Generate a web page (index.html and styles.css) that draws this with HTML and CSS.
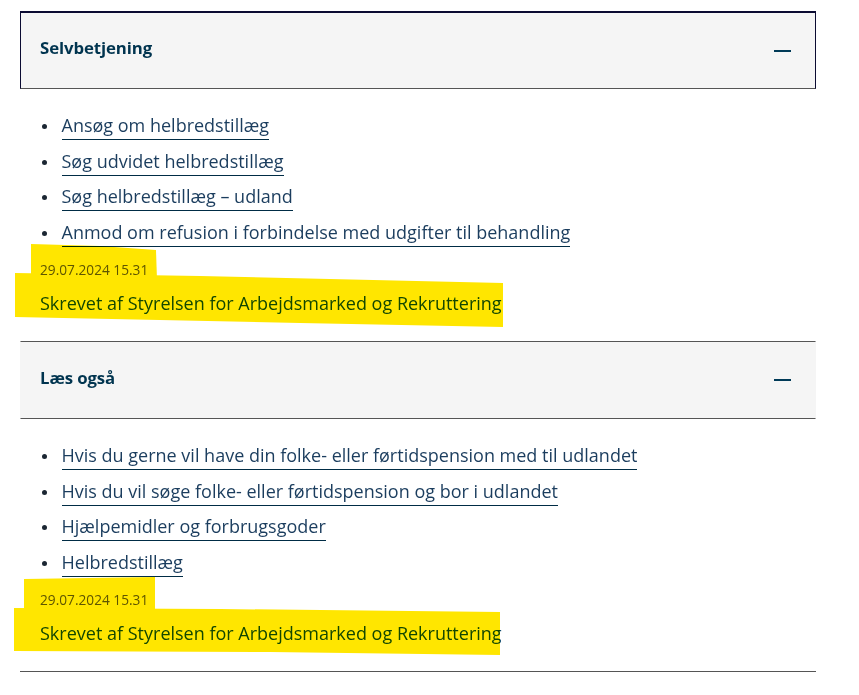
FILE: index.html
```html
<!DOCTYPE html>
<html lang="da">
<head>
<meta charset="utf-8">
<title>Helbredstillæg</title>
<link rel="stylesheet" href="styles.css">
</head>
<body>
<main class="page">
  <section class="acc">
    <div class="acc-head acc-head--focus">
      <h2 class="acc-title">Selvbetjening</h2>
      <span class="acc-minus" aria-hidden="true"></span>
    </div>
    <div class="acc-body">
      <ul class="links">
        <li><a href="#">Ansøg om helbredstillæg</a></li>
        <li><a href="#">Søg udvidet helbredstillæg</a></li>
        <li><a href="#">Søg helbredstillæg – udland</a></li>
        <li><a href="#">Anmod om refusion i forbindelse med udgifter til behandling</a></li>
      </ul>
      <div class="meta">
        <div class="meta-date">29.07.2024 15.31</div>
        <div class="meta-author">Skrevet af Styrelsen for Arbejdsmarked og Rekruttering</div>
        <svg class="marker" width="1" height="1" aria-hidden="true">
          <polygon points="11,-16 80,-14 136,-10 137,20 11,20"/>
          <polygon points="-5,13 180,16 483,23 483,67 280,63 -5,57"/>
        </svg>
      </div>
    </div>
  </section>
  <section class="acc">
    <div class="acc-head">
      <h2 class="acc-title">Læs også</h2>
      <span class="acc-minus" aria-hidden="true"></span>
    </div>
    <div class="acc-body">
      <ul class="links">
        <li><a href="#">Hvis du gerne vil have din folke- eller førtidspension med til udlandet</a></li>
        <li><a href="#">Hvis du vil søge folke- eller førtidspension og bor i udlandet</a></li>
        <li><a href="#">Hjælpemidler og forbrugsgoder</a></li>
        <li><a href="#">Helbredstillæg</a></li>
      </ul>
      <div class="meta">
        <div class="meta-date">29.07.2024 15.31</div>
        <div class="meta-author">Skrevet af Styrelsen for Arbejdsmarked og Rekruttering</div>
        <svg class="marker" width="1" height="1" aria-hidden="true">
          <polygon points="4,-11 135,-13 135,21 4,21"/>
          <polygon points="-6,18 200,19 480,22 480,65 250,62 -6,61"/>
        </svg>
      </div>
    </div>
  </section>
</main>
</body>
</html>
```
FILE: styles.css
```css
html, body {
  margin: 0;
  padding: 0;
  background: #ffffff;
}
body {
  font-family: "Open Sans", "Noto Sans", sans-serif;
  color: #1a1a1a;
}
.page {
  width: 796px;
  margin: 11px 0 0 20px;
  border-bottom: 1px solid #555555;
}
.acc-head {
  display: flex;
  align-items: center;
  justify-content: space-between;
  box-sizing: border-box;
  height: 78px;
  padding: 0 24px 0 19px;
  background: #f5f5f5;
  border-top: 1px solid #555555;
  border-bottom: 1px solid #555555;
  border-left: 1px solid transparent;
  border-right: 1px solid transparent;
}
.acc-head--focus {
  border-top: 2px solid #0b0b32;
  border-left-color: #0b0b32;
  border-right-color: #0b0b32;
}
.acc-title {
  margin: 0 0 5px 0;
  font-size: 16.8px;
  line-height: 24px;
  font-weight: 700;
  letter-spacing: -0.1px;
  color: #00344f;
}
.acc-minus {
  width: 17px;
  height: 2px;
  background: #003a57;
}
.acc-body {
  padding: 24px 0 24px 0;
}
.links {
  list-style: none;
  margin: 0;
  padding: 0 0 0 21.5px;
  display: flex;
  flex-direction: column;
  gap: 8.5px;
}
.links li {
  display: flex;
  align-items: center;
  gap: 15px;
  height: 27px;
  font-size: 18px;
}
.links li::before {
  content: "";
  flex: none;
  width: 5px;
  height: 5px;
  border-radius: 50%;
  background: #1b2733;
}
.links a {
  display: block;
  line-height: 25px;
  color: #1b3d5e;
  text-decoration: none;
  border-bottom: 1px solid #002c45;
  padding-bottom: 1px;
  white-space: nowrap;
}
.meta {
  position: relative;
  margin-top: 13px;
  padding-left: 20px;
}
.meta-date {
  font-size: 13.7px;
  line-height: 20px;
  color: #5e5e5e;
}
.meta-author {
  margin-top: 10.5px;
  font-size: 18px;
  line-height: 27px;
  color: #124e70;
}
.marker {
  position: absolute;
  left: 0;
  top: 0;
  overflow: visible;
  pointer-events: none;
  mix-blend-mode: multiply;
  fill: #ffe600;
}
```
